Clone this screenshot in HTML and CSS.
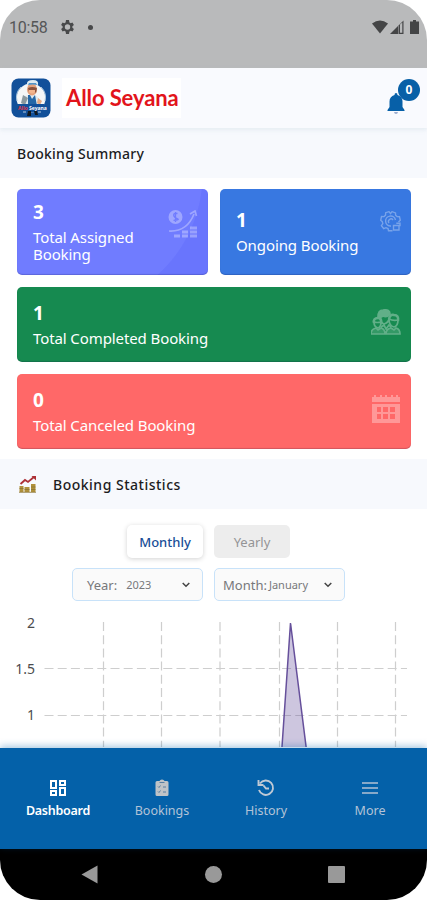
FILE: index.html
```html
<!DOCTYPE html>
<html lang="en">
<head>
    <meta charset="UTF-8">
    <meta name="viewport" content="width=device-width, initial-scale=1.0">
    <title>Allo Seyana - Dashboard</title>
    <link rel="stylesheet" href="styles.css">
</head>
<body>
    <div class="phone">
        <div class="status-bar">
            <span class="clock">10:58</span>
            <svg class="status-gear" width="16" height="16" viewBox="1 1 22 22"><path fill="#48494a" fill-rule="evenodd" d="M19.400 13a7.500 7.500 0 0 0 0-2l2.100-1.600-2-3.500-2.500 1a7.500 7.500 0 0 0-1.700-1L14.800 2.500h-4.200l-.5 3.400a7.500 7.500 0 0 0-1.700 1l-2.500-1-2 3.500L6 11a7.500 7.500 0 0 0 0 2l-2.100 1.600 2 3.500 2.500-1a7.500 7.500 0 0 0 1.700 1l.5 3.400h4.200l.5-3.400a7.500 7.500 0 0 0 1.700-1l2.500 1 2-3.500zM12.700 8.300a3.700 3.700 0 1 1 0 7.400 3.700 3.700 0 0 1 0-7.400z"/></svg>
            <span class="status-dot"></span>
            <svg class="status-signal" width="48" height="15" viewBox="0 0 48 15">
                <path fill="#444546" d="M0 3.500Q8-2.500 16 3.500L8 13.500z"/>
                <path fill="#444546" d="M18 14 31.500.5V14h-5V5.500L18 14zM28 4.500V12.800H30.300V2.500z" fill-rule="evenodd"/>
                <path fill="#444546" d="M18 14l8-8v8z"/>
                <path fill="#444546" d="M41 0h3v1.500h3V14h-9V1.500h3z"/>
            </svg>
        </div>

        <div class="header">
            <svg class="logo" width="40" height="40" viewBox="0 0 40 40">
                <rect x=".5" y=".5" width="39" height="39" rx="7" fill="#12509a"/>
                <circle cx="20" cy="20" r="14.500" fill="#f4f6f7"/>
                <path d="M6 23a14.500 14.500 0 0 1 4-14M34 23a14.500 14.500 0 0 0-4-14" stroke="#a9c6de" fill="none"/>
                <path d="M11 28Q12 17 17 17h6q6 1 7 11z" fill="#dfe9ef"/>
                <path d="M17 17h2l2 4 3-4 2 11H17z" fill="#2467a6"/>
                <path d="M12 17l5 3-3 7-4-2z" fill="#8b999f"/>
                <path d="M27 20l4 3-2 4-3-2z" fill="#e6ab83"/>
                <ellipse cx="21" cy="11.500" rx="5" ry="6" fill="#e3a17c"/>
                <path d="M17 10q4-2 9 0l-1 5-2-2-5 1z" fill="#89513d"/>
                <path d="M18 12h6v2q-3 3-6 0z" fill="#f2b58d"/>
                <path d="M16 7q-1-5 6-5 6 0 5 5-5-2-11 0z" fill="#deebf2"/>
                <path d="M18 5h7l1 2q-4-1-9 0z" fill="#5294c8"/>
                <path d="M6 26h27v6q-13 5-27 0z" fill="#12509a"/>
                <text x="7" y="32" class="logo-red">Allo</text>
                <text x="18" y="32" class="logo-white">Seyana</text>
                <path d="M17 33h3v5h-4zM23 33h3l1 4h-3z" fill="#111820"/>
                <path d="M12 34h3M27 34h3" stroke="#b6cadd"/>
            </svg>
            <h1>Allo Seyana</h1>
            <div class="bell">
                <svg width="18" height="22" viewBox="0 0 18 22">
                    <path fill="#0760a8" d="M9 0q1.500 0 1.500 2Q15.500 3.500 15.500 8.500V14l2 3v1H.5v-1l2-3V8.500Q2.500 3.500 7.500 2 7.500 0 9 0z"/>
                    <path fill="#9caccf" d="M7 19h4q-.3 2-2 2t-2-2z"/>
                </svg>
                <span class="badge">0</span>
            </div>
        </div>

        <h2 class="section-title">Booking Summary</h2>

        <div class="cards">
            <div class="card card-assigned">
                <div>
                    <strong>3</strong>
                    <p>Total Assigned Booking</p>
                </div>
                <svg width="30" height="30" viewBox="0 0 30 30">
                    <circle cx="7.500" cy="7" r="7" fill="#fff"/>
                    <path d="M9.500 3.500Q5.500 3 5.700 5.200T9.200 8.600 5.500 10.300M7.500 2v10" stroke="#707cff" stroke-width="1.300" fill="none"/>
                    <path d="M1 21Q19 22 26 4M22 4l5-3 1.500 5" stroke="#fff" stroke-width="1.700" fill="none"/>
                    <path d="M6 26h6M14 22h6M14 26h6M22 18h7M22 22h7M22 26h7" stroke="#fff" stroke-width="3"/>
                </svg>
            </div>
            <div class="card card-ongoing">
                <div>
                    <strong>1</strong>
                    <p>Ongoing Booking</p>
                </div>
                <svg width="21" height="21" viewBox="0 0 21 21" fill="none" stroke="#fff" stroke-width="1.400">
                    <path d="M12.500 19.700h-4L8 17.500l-2-.8-2.300 1-2.300-3 1.400-2-.5-2L.7 9.300l.8-3.800 2.600.1 1.400-1.400.2-2.500L9 .7l1.500 2 1.500-2 3.500 1.200.1 2.300 1.500 1.400 2.400.1.800 3.600-1.800 1.700"/>
                    <path d="M11 15a5 5 0 1 1 4.500-6M9 12a2.500 2.500 0 1 1 4-3"/>
                    <path d="M13.500 14.500h5.500v4.500h-5.500zM16.300 12.300h3.700v3"/>
                </svg>
            </div>
            <div class="card card-completed">
                <div>
                    <strong>1</strong>
                    <p>Total Completed Booking</p>
                </div>
                <svg width="30" height="26" viewBox="0 0 30 26" fill="none" stroke="#fff" stroke-width="1.700">
                    <path d="M7 8Q7 1 12 1q7-1 7 4-3 4-7 2-2 2-5 1z" fill="#fff"/>
                    <path d="M3 14Q2 9 7 9q4 0 3 5M18 10q1-5 5-4 5 0 4 6" stroke-width="2.500"/>
                    <path d="M3 13q0 5 4 6 3-1 3-6-4 1-7 0zM18 10q0 7 5 8 4-1 4-7-5 1-9-1zM9 9q1 5 4 6 4-1 5-5"/>
                    <path d="M0 25q0-5 5-6l2 2 3-2q4 1 4 6zM15 25q0-5 5-6l3 2 2-2q4 1 4 6zM10 18l3-2 2 4 3-4 2 2" fill="rgba(255,255,255,.4)"/>
                </svg>
            </div>
            <div class="card card-canceled">
                <div>
                    <strong>0</strong>
                    <p>Total Canceled Booking</p>
                </div>
                <svg width="30" height="28" viewBox="0 0 30 28">
                    <path fill="#fff" fill-rule="evenodd" d="M1 2h2V0h2v2h4V0h2v2h3V0h2v2h4V0h2v2h3V0h2v2h2v5H1zM1 9h28v19H1zM6 12v5h4v-5zM12 12v5h5v-5zM19 12v5h5v-5zM6 19v5h4v-5zM12 19v5h5v-5zM19 19v5h5v-5z"/>
                </svg>
            </div>
        </div>

        <h2 class="section-title stats-title">
            <svg width="18" height="17" viewBox="0 0 18 17">
                <path d="M1.500 8 6 4l3 2 6-5" stroke="#ad3037" stroke-width="1.800" fill="none"/>
                <path d="M12.500 0H17v4.500z" fill="#ad3037"/>
                <path d="M.5 10h4v6h-4zM5.500 11h5v5h-5zM12 8h4.500v8H12z" fill="#b0913b"/>
                <path d="M.5 12.500h4M5.500 13.500h5M12 11h4.500M12 13.500h4.500M0 16.300h17" stroke="#8a7433" stroke-width=".8"/>
            </svg>
            Booking Statistics
        </h2>

        <div class="stats">
            <div class="toggle">
                <button class="tab active">Monthly</button>
                <button class="tab">Yearly</button>
            </div>
            <div class="filters">
                <div class="filter filter-year">
                    <span class="label">Year:</span><span class="value">2023</span>
                    <svg width="8" height="6" viewBox="0 0 8 6"><path d="m.7 1 3.300 3.300L7.300 1" stroke="#444" stroke-width="1.500" fill="none"/></svg>
                </div>
                <div class="filter filter-month">
                    <span class="label">Month:</span><span class="value">January</span>
                    <svg width="8" height="6" viewBox="0 0 8 6"><path d="m.7 1 3.300 3.300L7.300 1" stroke="#444" stroke-width="1.500" fill="none"/></svg>
                </div>
            </div>
            <svg class="chart" width="427" height="138" viewBox="0 0 427 138">
                <path class="grid" d="M103.500 13V138M161.500 13V138M220 13V138M279.500 13V138M337.500 13V138M395.500 13V138M44.500 59.500H407M44.500 106.500H407"/>
                <path class="area" d="M281.500 145 290.500 14 307 145"/>
                <text x="35" y="18.500">2</text>
                <text x="35" y="64.500">1.5</text>
                <text x="35" y="111">1</text>
            </svg>
        </div>

        <div class="bottom-nav">
            <a class="nav-item active">
                <svg width="16" height="16" viewBox="0 0 16 16" fill="none" stroke="#fff" stroke-width="2">
                    <path d="M1 1h5v7H1zM10 1h5v4h-5zM10 8h5v7h-5zM1 11h5v4H1z"/>
                </svg>
                <span>Dashboard</span>
            </a>
            <a class="nav-item">
                <svg width="14" height="17" viewBox="0 0 14 17">
                    <path fill="#bfc3c7" d="M2 1.500h2.500Q5 0 7 0t2.500 1.500H12q1.500 0 1.500 1.500v12q0 1.500-1.500 1.500H2Q.5 16.500.5 15V3Q.5 1.500 2 1.500z"/>
                    <path d="M4.500 3h5M3 7l1 1 1.500-2M3 12l1 1 1.500-2M8 7.500h3M8 12.500h3" stroke="#597fa2" fill="none"/>
                </svg>
                <span>Bookings</span>
            </a>
            <a class="nav-item">
                <svg width="18" height="18" viewBox="0 0 18 18" fill="none" stroke="#bfc9d5" stroke-width="1.900">
                    <path d="M3 4.500A7.200 7.200 0 1 1 2 11M1.500 1v5h5M6.500 6.500 9 9.500h3"/>
                </svg>
                <span>History</span>
            </a>
            <a class="nav-item">
                <svg width="16" height="12" viewBox="0 0 16 12"><path d="M0 1h16M0 6h16M0 11h16" stroke="#b3c1d4" stroke-width="1.500"/></svg>
                <span>More</span>
            </a>
        </div>

        <div class="system-nav">
            <svg width="17" height="19" viewBox="0 0 17 19"><path fill="#999" d="M16.500.5v18L.5 9.500z"/></svg>
            <span class="home"></span>
            <span class="recent"></span>
        </div>
    </div>
</body>
</html>
```
FILE: styles.css
```css
:root {
    --blue: #0461a9;
    --panel: #f7f9fd;
    --text: #1c1c1e;
    --muted: #77787b;
}

* {
    margin: 0;
    padding: 0;
    box-sizing: border-box;
    font-family: 'Noto Sans', 'Open Sans', sans-serif;
}

body {
    background: #fff;
    color: var(--text);
}

.phone {
    width: 427px;
    height: 900px;
    background: #fff;
    border-radius: 40px;
    overflow: hidden;
    display: flex;
    flex-direction: column;
}

.status-bar {
    height: 68px;
    flex-shrink: 0;
    background: #b9babb;
    display: flex;
    align-items: flex-start;
    padding: 19px 7px 0 9px;
}

.clock {
    width: 50px;
    font-family: Roboto, sans-serif;
    font-size: 16px;
    line-height: 18px;
    letter-spacing: -0.3px;
    color: #555657;
}

.status-dot {
    width: 5px;
    height: 5px;
    border-radius: 50%;
    background: #48494a;
    margin: 6px 0 0 13px;
}

.status-signal {
    margin: 1px 0 0 auto;
}

.header {
    height: 60px;
    flex-shrink: 0;
    display: flex;
    align-items: center;
    padding: 0 7px 0 11px;
    background: #f9fafe;
    box-shadow: 0 2px 4px rgba(190, 210, 220, 0.3);
    z-index: 1;
}

.logo-red,
.logo-white {
    font-size: 5px;
    font-weight: 700;
    fill: #e23648;
}

.logo-white {
    fill: #fff;
}

.header h1 {
    width: 119px;
    height: 40px;
    margin-left: 11px;
    padding-left: 4px;
    background: #fff;
    color: #e2141b;
    font-family: Lato, sans-serif;
    font-size: 22px;
    line-height: 40px;
    font-weight: 700;
    letter-spacing: -0.1px;
    white-space: nowrap;
}

.bell {
    position: relative;
    width: 33px;
    height: 36px;
    margin-left: auto;
    padding-top: 13px;
}

.badge {
    position: absolute;
    top: -1px;
    right: 0;
    width: 22px;
    height: 22px;
    border-radius: 50%;
    background: #0860a7;
    color: #fff;
    font-size: 12px;
    line-height: 22px;
    font-weight: 700;
    text-align: center;
}

.section-title {
    height: 50px;
    flex-shrink: 0;
    display: flex;
    align-items: center;
    padding-left: 17px;
    background: var(--panel);
    font-size: 14px;
    font-weight: 500;
    letter-spacing: 0.25px;
}

.cards {
    display: grid;
    grid-template-columns: 191px 191px;
    grid-template-rows: 86px 75px 75px;
    gap: 12px;
    padding: 11px 16px 10px 17px;
    flex-shrink: 0;
}

.card {
    display: flex;
    align-items: center;
    justify-content: space-between;
    padding: 1px 10px 0 16px;
    border-radius: 5px;
    color: #fff;
    box-shadow: inset 0 -1px 1px rgba(0, 0, 50, 0.18);
}

.card strong {
    display: block;
    font-size: 19px;
    line-height: 25px;
}

.card p {
    font-size: 15px;
    line-height: 17.5px;
    padding: 4px 0 2px;
    letter-spacing: -0.1px;
}

.card svg {
    flex-shrink: 0;
    opacity: 0.32;
}

.card-assigned {
    background: radial-gradient(circle at 50px -15px, #707cff 135px, #6975fd 136px);
}

.card-assigned p {
    width: 110px;
}

.card-assigned svg {
    margin-bottom: 16px;
}

.card-ongoing {
    background: #3878e1;
}

.card-ongoing svg {
    margin-bottom: 22px;
}

.card-completed {
    grid-column: span 2;
    background: #168a50;
}

.card-completed svg {
    margin-bottom: 6px;
}

.card-canceled {
    grid-column: span 2;
    background: #ff6868;
}

.card-canceled svg {
    margin-bottom: 6px;
}

.stats-title {
    gap: 16px;
    padding-left: 19px;
    letter-spacing: 0.5px;
}

.stats {
    flex: 1;
    min-height: 0;
    padding-top: 16px;
    overflow: hidden;
}

.toggle,
.filters {
    display: flex;
    justify-content: center;
    gap: 11px;
}

.toggle {
    padding-right: 10px;
}

.filters {
    padding-right: 10px;
    margin: 10px 0 8px;
}

.tab {
    width: 76px;
    height: 33px;
    border: none;
    border-radius: 5px;
    background: #ededed;
    color: #949496;
    font-size: 13px;
}

.tab.active {
    background: #fff;
    color: #194f98;
    font-weight: 500;
    box-shadow: 0 1px 5px rgba(0, 0, 0, 0.18);
}

.filter {
    width: 131px;
    height: 33px;
    display: flex;
    align-items: center;
    padding: 0 12px 0 14px;
    border: 1px solid #c8e2f9;
    border-radius: 5px;
    background: #fafafa;
    color: var(--muted);
    font-size: 13px;
}

.filter .value {
    margin-left: 9px;
    font-size: 11px;
}

.filter svg {
    margin-left: auto;
}

.filter-month {
    padding-left: 8px;
}

.filter-month .value {
    margin-left: 2px;
}

.chart {
    display: block;
}

.chart .grid {
    fill: none;
    stroke: #cecece;
    stroke-width: 1.2;
    stroke-dasharray: 9 4.2;
}

.chart .area {
    fill: rgba(91, 66, 148, 0.3);
    stroke: #66509b;
    stroke-width: 1.5;
}

.chart text {
    fill: #4c4c4e;
    font-size: 14px;
    text-anchor: end;
}

.bottom-nav {
    height: 101px;
    flex-shrink: 0;
    display: flex;
    padding: 0 5px 0 6px;
    background: var(--blue);
    box-shadow: 0 -2px 7px rgba(4, 97, 169, 0.35);
    z-index: 1;
}

.nav-item {
    flex: 1;
    display: flex;
    flex-direction: column;
    align-items: center;
    padding-top: 30px;
    color: #b3c3d7;
    font-size: 12.5px;
    line-height: 18px;
}

.nav-item svg {
    height: 20px;
    margin-bottom: 4px;
}

.nav-item.active {
    color: #fff;
    font-weight: 600;
    letter-spacing: -0.25px;
}

.system-nav {
    height: 51px;
    flex-shrink: 0;
    display: flex;
    align-items: center;
    justify-content: space-between;
    padding: 0 82px 0 81px;
    background: #000;
}

.home {
    width: 17px;
    height: 17px;
    border-radius: 50%;
    background: #999;
}

.recent {
    width: 17px;
    height: 17px;
    border-radius: 1px;
    background: #999;
}
```
